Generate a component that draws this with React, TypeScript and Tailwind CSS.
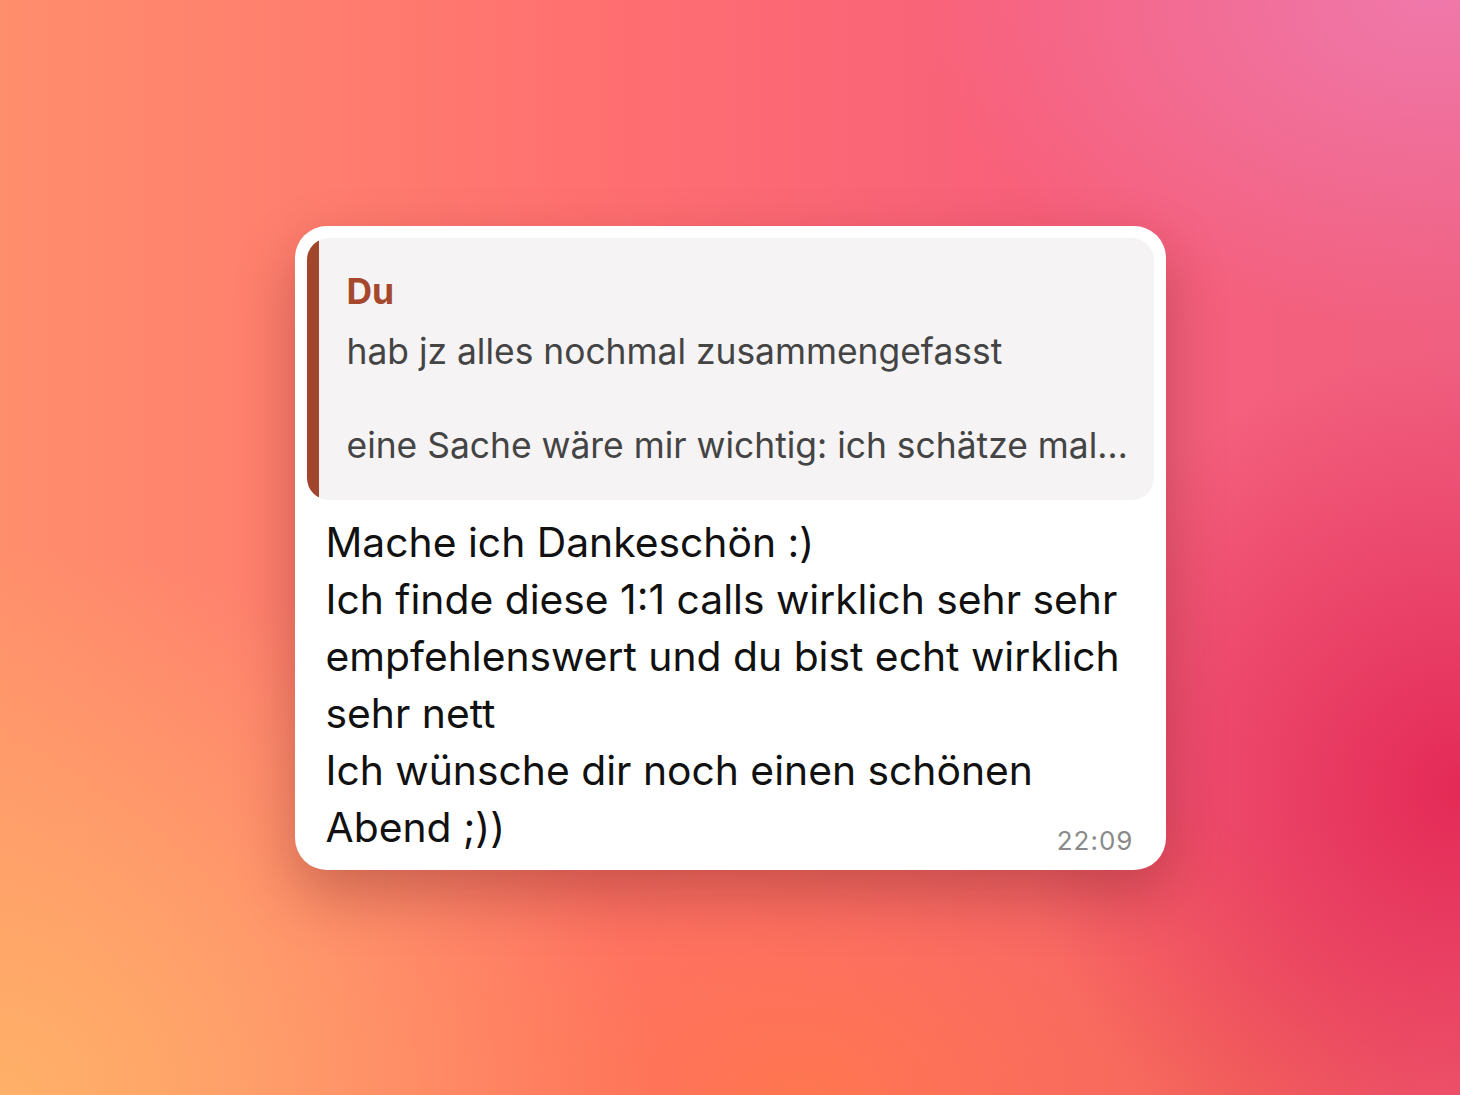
import React from 'react';

const lines = [
  'Mache ich Dankeschön :)',
  'Ich finde diese 1:1 calls wirklich sehr sehr',
  'empfehlenswert und du bist echt wirklich',
  'sehr nett',
  'Ich wünsche dir noch einen schönen',
];

const App = () => {
  return (
    <div className="w-[1460px] h-[1095px] flex items-center justify-center font-['Inter',_sans-serif] bg-[radial-gradient(ellipse_30%_40%_at_100%_72%,#e42a56_0%,rgba(228,42,86,0)_100%),radial-gradient(ellipse_35%_30%_at_98%_0%,#f078aa_0%,rgba(240,120,170,0)_100%),radial-gradient(ellipse_45%_50%_at_0%_100%,#ffb068_0%,rgba(255,176,104,0)_100%),radial-gradient(ellipse_40%_35%_at_55%_100%,#ff7650_0%,rgba(255,118,80,0)_100%),radial-gradient(ellipse_30%_30%_at_85%_100%,#f06060_0%,rgba(240,96,96,0)_100%),linear-gradient(90deg,#ff8e6c_0%,#ff7070_40%,#f8607a_70%,#f06080_100%)]">
      <div className="w-[871px] bg-white rounded-[32px] p-3 pb-[14px] shadow-[0_24px_60px_rgba(90,20,20,0.32)]">
        <div className="flex rounded-[22px] overflow-hidden bg-[#f5f3f4]">
          <div className="w-3 shrink-0 bg-[#a1452b]" />
          <div className="min-w-0 flex-1 pl-7 pr-4 pt-[30px] pb-[31px] text-[35.4px] leading-[47px] text-[#444]">
            <div className="font-bold text-[#a5482d] mb-[13px]">Du</div>
            <div>hab jz alles nochmal zusammengefasst</div>
            <div className="h-[47px]" />
            <div className="whitespace-nowrap overflow-hidden">eine Sache wäre mir wichtig: ich schätze mal…</div>
          </div>
        </div>
        <div className="pl-[19px] pr-5 pt-[14px] text-[40.8px] leading-[57px] text-[#111]">
          {lines.map((line) => (
            <div key={line} className="whitespace-nowrap">{line}</div>
          ))}
          <div className="flex items-end justify-between">
            <div>Abend ;))</div>
            <div className="text-[26px] leading-[30px] tracking-[1px] text-[#8a8a8a]">22:09</div>
          </div>
        </div>
      </div>
    </div>
  );
};

export default App;
